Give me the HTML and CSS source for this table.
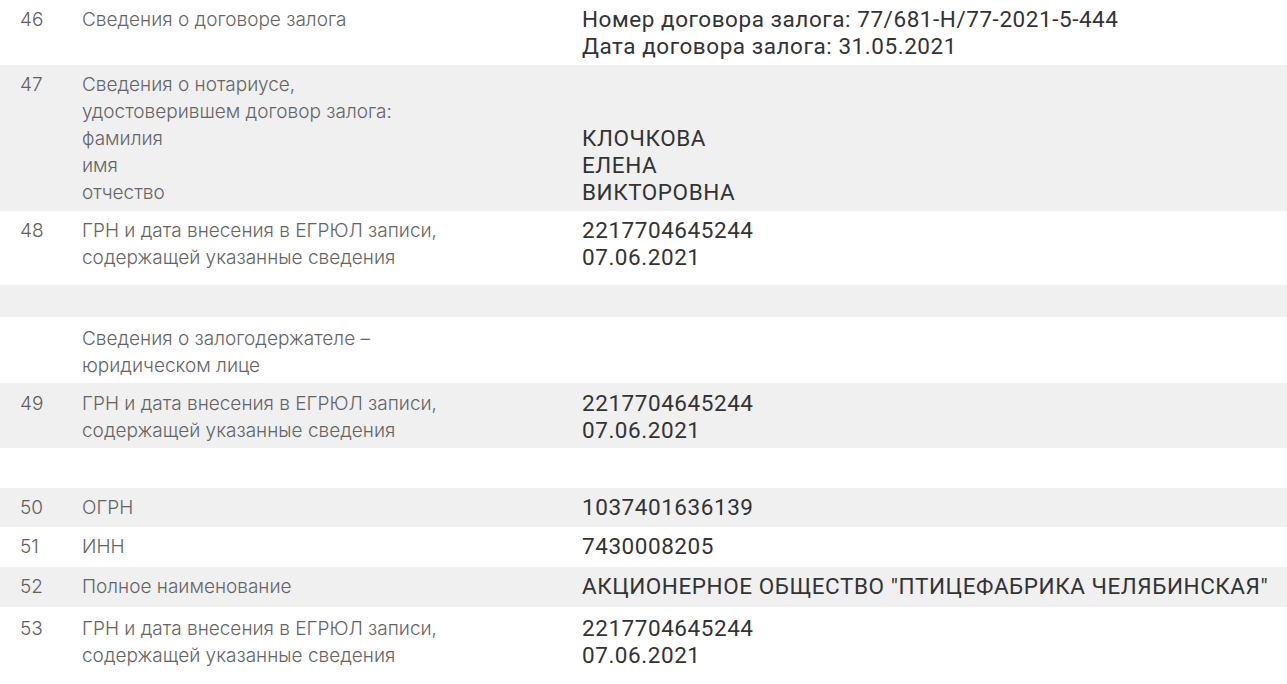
FILE: index.html
```html
<!DOCTYPE html>
<html lang="ru">
<head>
  <meta charset="UTF-8" />
  <meta name="viewport" content="width=device-width, initial-scale=1.0"/>
  <title>Выписка ЕГРЮЛ — залог</title>
  <link rel="stylesheet" href="styles.css">
</head>
<body>
  <div class="sheet">
    <div class="row r46">
      <div class="num">46</div>
      <div class="label">Сведения о договоре залога</div>
      <div class="value">Номер договора залога: 77/681-Н/77-2021-5-444<br>Дата договора залога: 31.05.2021</div>
    </div>

    <div class="row grey r47">
      <div class="num">47</div>
      <div class="label">Сведения о нотариусе,<br>удостоверившем договор залога:<br>фамилия<br>имя<br>отчество</div>
      <div class="value"><br><br>КЛОЧКОВА<br>ЕЛЕНА<br>ВИКТОРОВНА</div>
    </div>

    <div class="row r48">
      <div class="num">48</div>
      <div class="label">ГРН и дата внесения в ЕГРЮЛ записи,<br>содержащей указанные сведения</div>
      <div class="value">2217704645244<br>07.06.2021</div>
    </div>

    <div class="row grey spacer"></div>

    <div class="row heading">
      <div class="num"></div>
      <div class="label">Сведения о залогодержателе –<br>юридическом лице</div>
      <div class="value"></div>
    </div>

    <div class="row grey r49">
      <div class="num">49</div>
      <div class="label">ГРН и дата внесения в ЕГРЮЛ записи,<br>содержащей указанные сведения</div>
      <div class="value">2217704645244<br>07.06.2021</div>
    </div>

    <div class="row gap"></div>

    <div class="row grey single">
      <div class="num">50</div>
      <div class="label">ОГРН</div>
      <div class="value">1037401636139</div>
    </div>

    <div class="row single">
      <div class="num">51</div>
      <div class="label">ИНН</div>
      <div class="value">7430008205</div>
    </div>

    <div class="row grey single">
      <div class="num">52</div>
      <div class="label">Полное наименование</div>
      <div class="value">АКЦИОНЕРНОЕ ОБЩЕСТВО "ПТИЦЕФАБРИКА ЧЕЛЯБИНСКАЯ"</div>
    </div>

    <div class="row r53">
      <div class="num">53</div>
      <div class="label">ГРН и дата внесения в ЕГРЮЛ записи,<br>содержащей указанные сведения</div>
      <div class="value">2217704645244<br>07.06.2021</div>
    </div>
  </div>
</body>
</html>
```

FILE: styles.css
```css
body {
  margin: 0;
  padding: 0;
  background-color: #ffffff;
  font-family: Inter, 'Noto Sans', sans-serif;
}
.sheet {
  width: 1287px;
  height: 684px;
  overflow: hidden;
}
.row {
  display: grid;
  grid-template-columns: 82px 500px 1fr;
  padding: 6px 0 5px;
  line-height: 27px;
}
.grey {
  background-color: #f0f0f1;
}
.num {
  padding-left: 20px;
  font-weight: 300;
  font-size: 19px;
  color: #606060;
}
.label {
  font-weight: 300;
  font-size: 19px;
  color: #656565;
}
.value {
  font-family: Roboto, 'Liberation Sans', sans-serif;
  font-size: 22.5px;
  letter-spacing: 0.55px;
  color: #333333;
  white-space: nowrap;
}
.r48 {
  padding-bottom: 14px;
}
.spacer {
  height: 32px;
  padding: 0;
}
.heading {
  padding: 8px 0 4px;
}
.r49 {
  padding: 7px 0 4px;
}
.gap {
  height: 40px;
  padding: 0;
}
.single {
  padding: 6px 0;
  height: 27px;
}
.single + .single {
  height: 28px;
}
.r53 {
  padding-top: 8px;
}
```
